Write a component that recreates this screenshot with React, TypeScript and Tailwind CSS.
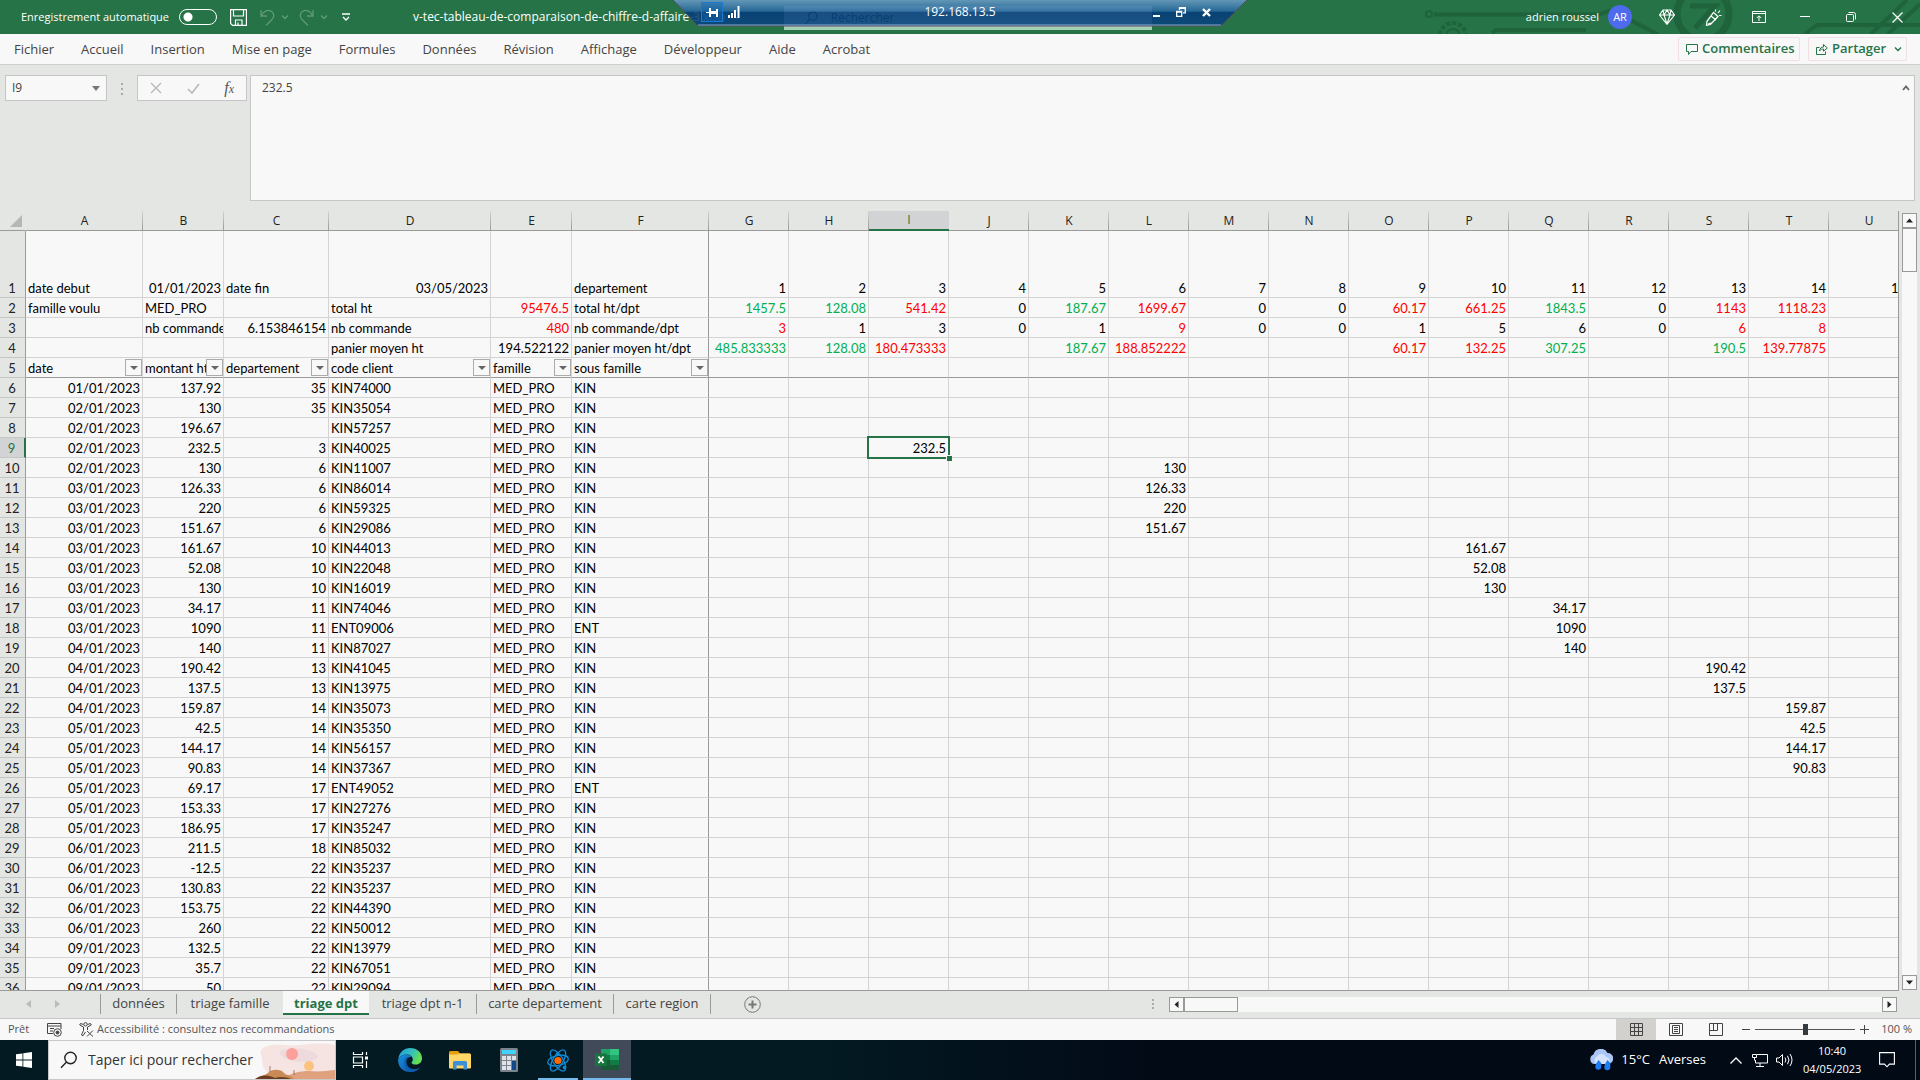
import React from 'react';
import { clsx } from 'clsx';

const MENU = ['Fichier', 'Accueil', 'Insertion', 'Mise en page', 'Formules', 'Données', 'Révision', 'Affichage', 'Développeur', 'Aide', 'Acrobat'];

const COLUMNS = [
  { name: 'A', width: 'w-[117px]' },
  { name: 'B', width: 'w-[81px]' },
  { name: 'C', width: 'w-[105px]' },
  { name: 'D', width: 'w-[162px]' },
  { name: 'E', width: 'w-[81px]' },
  { name: 'F', width: 'w-[137px]' },
  ...'GHIJKLMNOPQRSTU'.split('').map((name) => ({ name, width: 'w-[80px]' })),
];

type Cell = { text: string; align?: 'left' | 'right'; color?: 'red' | 'green'; filter?: boolean };

const l = (text: string): Cell => ({ text, align: 'left' });
const r = (text: string, color?: 'red' | 'green'): Cell => ({ text, align: 'right', color });
const f = (text: string): Cell => ({ text, align: 'left', filter: true });
const none: Cell = { text: '' };

const SUMMARY: Cell[][] = [
  [l('date debut'), r('01/01/2023'), l('date fin'), r('03/05/2023'), none, l('departement'),
    ...Array.from({ length: 15 }, (_, i) => r(String(i + 1)))],
  [l('famille voulu'), l('MED_PRO'), none, l('total ht'), r('95476.5', 'red'), l('total ht/dpt'),
    r('1457.5', 'green'), r('128.08', 'green'), r('541.42', 'red'), r('0'), r('187.67', 'green'), r('1699.67', 'red'), r('0'), r('0'),
    r('60.17', 'red'), r('661.25', 'red'), r('1843.5', 'green'), r('0'), r('1143', 'red'), r('1118.23', 'red'), none],
  [none, l('nb commande'), r('6.153846154'), l('nb commande'), r('480', 'red'), l('nb commande/dpt'),
    r('3', 'red'), r('1'), r('3'), r('0'), r('1'), r('9', 'red'), r('0'), r('0'), r('1'), r('5'), r('6'), r('0'), r('6', 'red'), r('8', 'red'), none],
  [none, none, none, l('panier moyen ht'), r('194.522122'), l('panier moyen ht/dpt'),
    r('485.833333', 'green'), r('128.08', 'green'), r('180.473333', 'red'), none, r('187.67', 'green'), r('188.852222', 'red'), none, none,
    r('60.17', 'red'), r('132.25', 'red'), r('307.25', 'green'), none, r('190.5', 'green'), r('139.77875', 'red'), none],
  [f('date'), f('montant ht'), f('departement'), f('code client'), f('famille'), f('sous famille'), ...Array.from({ length: 15 }, () => none)],
];

// date, montant, departement, code client, sous famille
const ORDERS: [string, string, string, string, string][] = [
  ['01/01/2023', '137.92', '35', 'KIN74000', 'KIN'],
  ['02/01/2023', '130', '35', 'KIN35054', 'KIN'],
  ['02/01/2023', '196.67', '', 'KIN57257', 'KIN'],
  ['02/01/2023', '232.5', '3', 'KIN40025', 'KIN'],
  ['02/01/2023', '130', '6', 'KIN11007', 'KIN'],
  ['03/01/2023', '126.33', '6', 'KIN86014', 'KIN'],
  ['03/01/2023', '220', '6', 'KIN59325', 'KIN'],
  ['03/01/2023', '151.67', '6', 'KIN29086', 'KIN'],
  ['03/01/2023', '161.67', '10', 'KIN44013', 'KIN'],
  ['03/01/2023', '52.08', '10', 'KIN22048', 'KIN'],
  ['03/01/2023', '130', '10', 'KIN16019', 'KIN'],
  ['03/01/2023', '34.17', '11', 'KIN74046', 'KIN'],
  ['03/01/2023', '1090', '11', 'ENT09006', 'ENT'],
  ['04/01/2023', '140', '11', 'KIN87027', 'KIN'],
  ['04/01/2023', '190.42', '13', 'KIN41045', 'KIN'],
  ['04/01/2023', '137.5', '13', 'KIN13975', 'KIN'],
  ['04/01/2023', '159.87', '14', 'KIN35073', 'KIN'],
  ['05/01/2023', '42.5', '14', 'KIN35350', 'KIN'],
  ['05/01/2023', '144.17', '14', 'KIN56157', 'KIN'],
  ['05/01/2023', '90.83', '14', 'KIN37367', 'KIN'],
  ['05/01/2023', '69.17', '17', 'ENT49052', 'ENT'],
  ['05/01/2023', '153.33', '17', 'KIN27276', 'KIN'],
  ['05/01/2023', '186.95', '17', 'KIN35247', 'KIN'],
  ['06/01/2023', '211.5', '18', 'KIN85032', 'KIN'],
  ['06/01/2023', '-12.5', '22', 'KIN35237', 'KIN'],
  ['06/01/2023', '130.83', '22', 'KIN35237', 'KIN'],
  ['06/01/2023', '153.75', '22', 'KIN44390', 'KIN'],
  ['06/01/2023', '260', '22', 'KIN50012', 'KIN'],
  ['09/01/2023', '132.5', '22', 'KIN13979', 'KIN'],
  ['09/01/2023', '35.7', '22', 'KIN67051', 'KIN'],
  ['09/01/2023', '50', '22', 'KIN29094', 'KIN'],
];

const ROWS: Cell[][] = [
  ...SUMMARY,
  ...ORDERS.map(([date, amount, dpt, client, sub]) => [
    r(date), r(amount), r(dpt), l(client), l('MED_PRO'), l(sub),
    ...Array.from({ length: 15 }, (_, i) => (Number(dpt) === i + 1 ? r(amount) : none)),
  ]),
];

const Chevron: React.FC<{ className?: string }> = ({ className }) => (
  <svg viewBox="0 0 8 6" className={clsx('h-[6px] w-2 shrink-0', className)} fill="none" stroke="currentColor" strokeWidth="1.4">
    <path d="M1 1.5l3 3 3-3" />
  </svg>
);

const TitleBar: React.FC = () => (
  <header className="relative grid h-[34px] shrink-0 grid-cols-[784fr_368px_768fr] items-center bg-[#257346] text-xs text-white">
    <svg className="absolute right-0 top-0 h-[34px] w-[500px]" viewBox="0 0 500 34" fill="none" stroke="#1f633c" strokeWidth="4">
      <path d="M14 14.500H178l14-4 46 24M72 33l4-3h90" />
      <circle cx="9" cy="14" r="3" strokeWidth="2" />
      <circle cx="33" cy="36" r="13" strokeWidth="4" strokeDasharray="4 2" />
      <circle cx="33" cy="36" r="7" strokeWidth="2" />
      <circle cx="283" cy="14" r="26" strokeWidth="7" />
      <path d="M270 6h25l-20 22" strokeWidth="5" />
      <path d="M385 34l12-9h103M451 34l36-34M468 34l32-30" />
    </svg>
    <div className="flex h-full min-w-0 items-center whitespace-nowrap pl-[21px]">
      <label htmlFor="autosave" className="w-[158px] shrink-0 text-[11px]">Enregistrement automatique</label>
      <input
        id="autosave"
        type="checkbox"
        className="h-4 w-[38px] shrink-0 appearance-none rounded-full border border-white bg-[radial-gradient(circle_at_8px_7px,white_4px,transparent_5px)]"
      />
      <button aria-label="Enregistrer" className="ml-[13px] shrink-0">
        <svg viewBox="0 0 17 17" className="size-[17px]" fill="none" stroke="currentColor" strokeWidth="1.2">
          <path d="M.6.600h15.800v15.800H2.600L.6 14.400zM3.500.600v6.400h10V.600M5.500 16V11h6.500v5M8 16v-2.500" />
        </svg>
      </button>
      <button aria-label="Annuler" className="ml-[13px] flex shrink-0 items-center gap-[6px] text-[#5f9b78]">
        <svg viewBox="0 0 15 17" className="h-[17px] w-[15px]" fill="none" stroke="currentColor" strokeWidth="1.3">
          <path d="M1 1v6h6M1.300 6.500C4 2 8 0 11.500 2.500s2.500 6 0 8.500l-5.500 5.500" />
        </svg>
        <Chevron />
      </button>
      <button aria-label="Rétablir" className="ml-[10px] flex shrink-0 items-center gap-[6px] text-[#5f9b78]">
        <svg viewBox="0 0 15 17" className="h-[17px] w-[15px]" fill="none" stroke="currentColor" strokeWidth="1.3">
          <path d="M14 1v6H8M13.700 6.500C11 2 7 0 3.500 2.500s-2.500 6 0 8.500l5.500 5.500" />
        </svg>
        <Chevron />
      </button>
      <button aria-label="Personnaliser" className="ml-[14px] shrink-0">
        <svg viewBox="0 0 8 8" className="size-2" fill="none" stroke="currentColor" strokeWidth="1.3">
          <path d="M0 1h8M1 4l3 3 3-3" />
        </svg>
      </button>
      <span className="ml-[63px]">v-tec-tableau-de-comparaison-de-chiffre-d-affaire-3.xlsb</span>
      <Chevron className="ml-2" />
    </div>
    <div className="mt-px flex h-6 items-center gap-3 bg-[#a3cfb5] pl-5 text-[#123b22]">
      <svg viewBox="0 0 16 16" className="size-4" fill="none" stroke="currentColor" strokeWidth="1.2">
        <circle cx="9.500" cy="6" r="4.500" />
        <path d="M6 9.500L1 15" />
      </svg>
      <input aria-label="Rechercher" placeholder="Rechercher" className="w-full bg-transparent outline-none placeholder:text-[#123b22]" />
    </div>
    <div className="relative flex items-center justify-end">
      <span className="text-[11px]">adrien roussel</span>
      <span className="ml-[9px] grid size-6 place-items-center rounded-full bg-[#4f6bed] text-[11px]">AR</span>
      <button aria-label="Premium" className="ml-[27px]">
        <svg viewBox="0 0 16 16" className="size-4" fill="none" stroke="currentColor" strokeWidth="1.1">
          <path d="M4 1h8l3.500 5L8 15.300.5 6zM.5 6h15M8 1L5 6l3 9 3-9zM4 1l1 5M12 1l-1 5" />
        </svg>
      </button>
      <button aria-label="Nouveautés" className="ml-[30px]">
        <svg viewBox="0 0 17 17" className="size-[17px]" fill="none" stroke="currentColor" strokeWidth="1.2">
          <path d="M8.500 3.500l4.500 4-7.500 8-4 .8.500-4zM3 15l4-1.200M6 7l5 4M10.500 2.500V.5M13 4l2-2.500M14 6.500h2.500" />
        </svg>
      </button>
      <button aria-label="Affichage du ruban" className="ml-[30px]">
        <svg viewBox="0 0 14 12" className="h-3 w-[14px]" fill="none" stroke="currentColor">
          <path d="M.5.5h13v11H.5zM.5 2.500h13M7 10V5M4.800 7L7 4.800 9.200 7" />
        </svg>
      </button>
      <button aria-label="Réduire" className="ml-[34px]">
        <svg viewBox="0 0 10 10" className="size-[10px]" stroke="currentColor"><path d="M0 4.500h10" /></svg>
      </button>
      <button aria-label="Restaurer" className="ml-9">
        <svg viewBox="0 0 10 10" className="size-[10px]" fill="none" stroke="currentColor">
          <rect x=".5" y="2.500" width="7" height="7" rx="1" />
          <path d="M2.500.5h5a2 2 0 012 2v5" />
        </svg>
      </button>
      <button aria-label="Fermer" className="ml-9 mr-[17px]">
        <svg viewBox="0 0 11 11" className="size-[11px]" stroke="currentColor" strokeWidth="1.2"><path d="M.5.5l10 10M10.500.5l-10 10" /></svg>
      </button>
    </div>
    <RemoteBar />
  </header>
);

// Remote desktop connection bar, pinned over the title bar
const RemoteBar: React.FC = () => (
  <div className="absolute left-1/2 top-0 h-[27px] w-[576px] -translate-x-1/2 text-white">
    <svg className="absolute inset-0 h-[27px] w-[576px]" viewBox="0 0 576 27">
      <defs>
        <linearGradient id="rdp" x1="0" y1="0" x2="0" y2="1">
          <stop offset="0" stopColor="#6b9cc6" />
          <stop offset=".44" stopColor="#2565a0" />
          <stop offset=".45" stopColor="#053c7b" />
          <stop offset="1" stopColor="#09437f" />
        </linearGradient>
      </defs>
      <path d="M1 0h574l-26 26H26z" fill="url(#rdp)" fillOpacity=".88" />
      <path d="M1 0l25 26h523L575 0" fill="none" stroke="#5b4a52" />
      <path d="M26 25h523" stroke="#86a9cf" />
    </svg>
    <div className="relative flex h-6 items-center justify-between pl-[29px] pr-[37px]">
      <div className="flex items-center gap-[5px]">
        <button aria-label="Épingler" className="grid h-5 w-[22px] place-items-center border border-[#1b7ad0] bg-[#0c62ae]/40">
          <svg viewBox="0 0 12 9" className="h-[9px] w-3" fill="currentColor"><path d="M0 4h3V0h2v3h5V1h2v8h-2V6H5v3H3V5H0z" /></svg>
        </button>
        <svg viewBox="0 0 12 12" className="size-3" fill="currentColor"><path d="M0 9h2v3H0zM3 7h2v5H3zM6 4h2v8H6zM9.500 0h2v12h-2z" /></svg>
      </div>
      <span className="pointer-events-none absolute inset-x-0 text-center leading-5">192.168.13.5</span>
      <div className="relative flex items-center gap-4">
        <button aria-label="Réduire la session"><svg viewBox="0 0 7 9" className="h-[9px] w-[7px]" fill="currentColor"><path d="M0 7h7v2H0z" /></svg></button>
        <button aria-label="Restaurer la session">
          <svg viewBox="0 0 10 10" className="size-[10px]" fill="none" stroke="currentColor" strokeWidth="1.300"><path d="M.7 4.500h5v4.800h-5zM.7 5.200h5M3.500 3V.7h5.800v5.100H7M3.500 1.300h5.500" /></svg>
        </button>
        <button aria-label="Fermer la session"><svg viewBox="0 0 9 9" className="size-[9px]" stroke="currentColor" strokeWidth="2.400"><path d="M1 1l7 7M8 1L1 8" /></svg></button>
      </div>
    </div>
  </div>
);

const MenuBar: React.FC = () => (
  <nav className="flex h-[31px] shrink-0 items-center border-b border-[#d2d0ce] bg-[#f8f8f8] pr-[13px] text-[#444]">
    {MENU.map((item) => (
      <button key={item} className="pl-[14px] pr-[13px] text-[13px] leading-5">{item}</button>
    ))}
    <button className="ml-auto flex h-6 w-[122px] items-center gap-1 rounded-xs border border-[#f1dfe3] pl-[7px] text-[13px] font-semibold text-[#257346]">
      <svg viewBox="0 0 12 11" className="h-[11px] w-3 shrink-0" fill="none" stroke="currentColor"><path d="M.5.5h11v7H5l-2.500 3v-3h-2z" /></svg>
      Commentaires
    </button>
    <button className="ml-2 flex h-6 w-[99px] items-center gap-1 rounded-xs border border-[#f1dfe3] pl-[7px] text-[13px] font-semibold text-[#257346]">
      <svg viewBox="0 0 12 12" className="size-3 shrink-0" fill="none" stroke="currentColor"><path d="M3.500 4.500h-3v7h9v-3M3.500 8c.5-3 2-4 4-4V1.500L11.300 5 7.500 8.200V6C6 6 4.500 6.500 3.500 8z" /></svg>
      Partager
      <Chevron className="ml-auto mr-1" />
    </button>
  </nav>
);

const FormulaBar: React.FC = () => (
  <div className="flex shrink-0 items-start bg-[#e4e6e3] px-[5px] py-[10px] text-[13px] text-[#444]">
    <div className="flex h-[26px] w-[102px] items-center border border-[#c6c6c6] bg-[#f8f8f8] pr-[6px]">
      <input aria-label="Zone de nom" defaultValue="I9" className="w-full min-w-0 bg-transparent pl-[6px] text-xs outline-none" />
      <button aria-label="Noms"><svg viewBox="0 0 8 5" className="h-[5px] w-2" fill="#777"><path d="M0 0h8L4 5z" /></svg></button>
    </div>
    <svg viewBox="0 0 2 12" className="mx-[14px] mt-2 h-3 w-[2px]" fill="#aaa"><path d="M0 0h2v2H0zM0 5h2v2H0zM0 10h2v2H0z" /></svg>
    <div className="flex h-[26px] w-[110px] items-center justify-between border border-[#c6c6c6] bg-[#f8f8f8] px-3">
      <button aria-label="Annuler la saisie"><svg viewBox="0 0 12 12" className="size-3" stroke="#b9b9b9" strokeWidth="1.400"><path d="M1 1l10 10M11 1L1 11" /></svg></button>
      <button aria-label="Valider"><svg viewBox="0 0 13 11" className="h-[11px] w-[13px]" fill="none" stroke="#b9b9b9" strokeWidth="1.600"><path d="M1 6l4 4 7-9" /></svg></button>
      <button aria-label="Insérer une fonction" className="font-['Liberation_Serif',serif] text-base italic leading-5 text-[#555]">f<span className="text-xs">x</span></button>
    </div>
    <div className="ml-[3px] flex h-[126px] flex-1 border border-[#c6c6c6] bg-[#f8f8f8]">
      <textarea aria-label="Barre de formule" defaultValue="232.5" className="h-full flex-1 resize-none bg-transparent pl-[11px] pt-[2px] text-xs leading-5 outline-none" />
      <button aria-label="Réduire la barre de formule" className="mr-1 mt-[9px] self-start">
        <svg viewBox="0 0 8 6" className="h-[6px] w-2" fill="none" stroke="#666" strokeWidth="1.800"><path d="M1 5l3-3.500L7 5" /></svg>
      </button>
    </div>
  </div>
);

const SheetCell: React.FC<{ cell: Cell; row: number; col: number }> = ({ cell, row, col }) => {
  const selected = row === 9 && COLUMNS[col].name === 'I';
  return (
    <td
      className={clsx(
        'relative h-5 whitespace-nowrap border-b border-r p-0 align-bottom leading-[17px]',
        row === 5 ? 'border-b-[#999b99]' : 'border-b-[#d4d4d4]',
        col === 5 ? 'border-r-[#999b99]' : 'border-r-[#d4d4d4]',
        cell.align === 'right' ? 'text-right' : 'text-left',
        cell.color === 'red' && 'text-[#ff0000]',
        cell.color === 'green' && 'text-[#00b050]',
        selected && 'z-10',
      )}
    >
      <div className="overflow-x-clip px-[2px]">{cell.text}</div>
      {cell.filter && (
        <button aria-label={`Filtrer ${cell.text}`} className="absolute right-0 top-px grid size-[17px] place-items-center border border-[#ababab] bg-[#f8f8f8]">
          <svg viewBox="0 0 8 4" className="h-1 w-2" fill="#666"><path d="M0 0h8L4 4z" /></svg>
        </button>
      )}
      {selected && (
        <span className="absolute -inset-[2px] border-2 border-[#257346]">
          <span className="absolute -bottom-1 -right-1 size-[6px] border-l border-t border-[#f8f8f8] bg-[#257346]" />
        </span>
      )}
    </td>
  );
};

const ScrollButton: React.FC<{ label: string; d: string }> = ({ label, d }) => (
  <button aria-label={label} className="grid size-[15px] shrink-0 place-items-center border border-[#999] bg-[#f8f8f8]">
    <svg viewBox="0 0 7 7" className="size-[7px]" fill="#222"><path d={d} /></svg>
  </button>
);

const Sheet: React.FC = () => (
  <div className="flex min-h-0 flex-1 bg-[#e4e6e3]">
    <div className="min-w-0 flex-1 overflow-hidden border-b border-r border-[#999b99]">
      <table className="w-[1909px] table-fixed border-separate border-spacing-0 bg-[#f8f8f8] font-['Lato',sans-serif] text-[13px] text-black">
        <thead className="bg-[#e4e6e3]">
          <tr>
            <th className="h-5 w-[26px] border-b border-r border-b-[#999b99] border-r-transparent p-0">
              <svg viewBox="0 0 12 12" className="ml-auto mr-[3px] size-3" fill="#b5b6b5"><path d="M12 0v12H0z" /></svg>
            </th>
            {COLUMNS.map(({ name, width }) => (
              <th
                key={name}
                className={clsx(
                  'h-5 p-0 font-[\'Open_Sans\',sans-serif] text-xs font-normal leading-[18px]',
                  width,
                  name === 'I'
                    ? 'border-b-2 border-[#257346] bg-[#d2d3d5] text-[#257346]'
                    : 'border-b border-[#999b99] bg-[linear-gradient(to_bottom,#d4d6d3,#999b99)] bg-[length:1px_100%] bg-right bg-no-repeat text-[#222]',
                )}
              >
                {name}
              </th>
            ))}
          </tr>
        </thead>
        <tbody>
          {ROWS.map((cells, i) => (
            <tr key={i} className={i === 0 ? 'h-[67px]' : 'h-5'}>
              <th
                className={clsx(
                  'h-5 border-b border-r border-b-[#c4c6c4] p-0 pr-px align-bottom font-normal leading-[17px]',
                  i === 8 ? 'border-r-2 border-r-[#257346] bg-[#d2d3d5] text-[#257346]' : 'border-r-[#999b99] bg-[#e4e6e3] text-[#222]',
                )}
              >
                {i + 1}
              </th>
              {cells.map((cell, col) => (
                <SheetCell key={col} cell={cell} row={i + 1} col={col} />
              ))}
            </tr>
          ))}
        </tbody>
      </table>
    </div>
    <div className="flex w-[21px] shrink-0 flex-col px-[3px] pb-px pt-[2px]">
      <ScrollButton label="Défiler vers le haut" d="M3.500 1.500L7 5.500H0z" />
      <div className="flex-1 bg-[#f8f8f8]">
        <div className="h-[44px] border border-[#999] bg-[#f8f8f8]" />
      </div>
      <ScrollButton label="Défiler vers le bas" d="M0 1.500h7L3.500 5.500z" />
    </div>
  </div>
);

const TABS = [
  { name: 'données', width: 'w-[76px]' },
  { name: 'triage famille', width: 'w-[106px]' },
  { name: 'triage dpt', width: 'w-[86px]' },
  { name: 'triage dpt n-1', width: 'w-[108px]' },
  { name: 'carte departement', width: 'w-[137px]' },
  { name: 'carte region', width: 'w-[97px]' },
];

const SheetTabs: React.FC = () => (
  <div className="flex h-7 shrink-0 items-start border-b border-[#c6c6c6] bg-[#e4e6e3] text-[13px] text-[#444]">
    <div className="flex h-[26px] w-[100px] items-center gap-6 pl-[26px]">
      <button aria-label="Feuille précédente"><svg viewBox="0 0 5 8" className="h-2 w-[5px]" fill="#bbb"><path d="M5 0v8L0 4z" /></svg></button>
      <button aria-label="Feuille suivante"><svg viewBox="0 0 5 8" className="h-2 w-[5px]" fill="#bbb"><path d="M0 0v8l5-4z" /></svg></button>
    </div>
    <span className="mt-[3px] h-5 w-px bg-[#999b99]" />
    {TABS.map(({ name, width }, i) => (
      <button
        key={name}
        className={clsx(
          'shrink-0 whitespace-nowrap',
          width,
          i === 2 && 'h-6 border-b-2 border-b-[#257346] bg-[#f8f8f8] font-bold leading-6 text-[#257346]',
          i !== 2 && 'mt-[3px] h-5 pb-[2px] leading-[18px]',
          i !== 1 && i !== 2 && 'border-r border-[#999b99]',
        )}
      >
        {name}
      </button>
    ))}
    <button aria-label="Nouvelle feuille" className="ml-[33px] mt-[5px]">
      <svg viewBox="0 0 17 17" className="size-[17px]" fill="none" stroke="#777">
        <circle cx="8.500" cy="8.500" r="7.800" />
        <path d="M8.500 4.500v8M4.500 8.500h8" strokeWidth="2" />
      </svg>
    </button>
    <svg viewBox="0 0 2 12" className="ml-auto mr-[15px] mt-2 h-3 w-[2px]" fill="#aaa"><path d="M0 0h2v2H0zM0 4h2v2H0zM0 8h2v2H0z" /></svg>
    <div className="mr-[23px] mt-[6px] flex w-[728px] bg-[#f8f8f8]">
      <ScrollButton label="Défiler à gauche" d="M1.500 3.500L5.500 0v7z" />
      <div className="w-[54px] border border-[#999]" />
      <div className="flex-1" />
      <ScrollButton label="Défiler à droite" d="M5.500 3.500L1.500 0v7z" />
    </div>
  </div>
);

const StatusBar: React.FC = () => (
  <div className="flex h-[21px] shrink-0 items-center bg-[#f8f8f8] px-2 text-[11px] text-[#555]">
    <span className="w-[39px]">Prêt</span>
    <button aria-label="Enregistrer une macro">
      <svg viewBox="0 0 15 14" className="h-[14px] w-[15px]" fill="none" stroke="#444">
        <path d="M14 6V.5H.5v10H6M.5 3h13.500M3 5.500h4M3 8h3" />
        <circle cx="10.500" cy="9.500" r="3.800" />
        <circle cx="10.500" cy="9.500" r="1.500" fill="#444" />
      </svg>
    </button>
    <button className="ml-[17px] flex items-center gap-[3px]">
      <svg viewBox="0 0 15 15" className="size-[15px]" fill="none" stroke="#444">
        <circle cx="6.500" cy="2.300" r="1.700" />
        <path d="M4.500 2.500L1.500 1.500l-.8 1.500L4.500 5v3.500L2.500 13l1.500.8L6.500 10M8.500 2.500l3-1 .8 1.500L8.500 5v3M8 9l6 5.500M14 8.500L8 14.500" />
      </svg>
      Accessibilité : consultez nos recommandations
    </button>
    <button aria-label="Normal" className="ml-auto grid h-full w-10 place-items-center bg-[#d2d1cd]">
      <svg viewBox="0 0 13 13" className="size-[13px]" fill="none" stroke="#444"><path d="M.5.5h12v12H.5zM.5 4.500h12M.5 8.500h12M4.500.5v12M8.500.5v12" /></svg>
    </button>
    <button aria-label="Mise en page" className="grid h-full w-10 place-items-center">
      <svg viewBox="0 0 14 13" className="h-[13px] w-[14px]" fill="none" stroke="#444"><path d="M.5.5h13v12H.5zM3.500 2.500h7v8h-7zM5 4.500h4M5 6.500h4M5 8.500h4" /></svg>
    </button>
    <button aria-label="Avec sauts de page" className="grid h-full w-10 place-items-center">
      <svg viewBox="0 0 14 13" className="h-[13px] w-[14px]" fill="none" stroke="#444"><path d="M.5.5h13v12H.5zM.5 7.500h8v-7M4.500.5v7" /></svg>
    </button>
    <button aria-label="Zoom arrière" className="ml-[6px]">
      <svg viewBox="0 0 8 9" className="h-[9px] w-2" stroke="#444"><path d="M0 4.500h8" /></svg>
    </button>
    <input
      aria-label="Zoom"
      type="range"
      className="mx-[5px] h-[11px] w-[100px] appearance-none bg-[linear-gradient(#555,#555)] bg-[length:100%_1px] bg-center bg-no-repeat [&::-webkit-slider-thumb]:h-[11px] [&::-webkit-slider-thumb]:w-[5px] [&::-webkit-slider-thumb]:appearance-none [&::-webkit-slider-thumb]:bg-[#333b40]"
    />
    <button aria-label="Zoom avant">
      <svg viewBox="0 0 9 9" className="size-[9px]" stroke="#444"><path d="M0 4.500h9M4.500 0v9" /></svg>
    </button>
    <span className="ml-3 whitespace-nowrap">100 %</span>
  </div>
);

const Taskbar: React.FC = () => (
  <footer className="flex h-10 shrink-0 items-stretch bg-[linear-gradient(to_right,#031a23,#031a23_42%,#020a16_60%)] text-white">
    <button aria-label="Démarrer" className="grid w-12 place-items-center">
      <svg viewBox="0 0 16 16" className="size-4" fill="currentColor"><path d="M0 2.300l6.500-.9v6.200H0zM7.300 1.300L16 0v7.600H7.300zM0 8.400h6.500v6.200L0 13.700zM7.300 8.400H16V16l-8.700-1.200z" /></svg>
    </button>
    <div className="relative flex w-[288px] items-center border border-[#c8c8c8] bg-[#f8f8f8] pl-[11px]">
      <svg viewBox="0 0 18 18" className="size-[18px] shrink-0" fill="none" stroke="#222" strokeWidth="1.400">
        <circle cx="10.500" cy="7" r="5.700" />
        <path d="M6.500 11L1 16.800" />
      </svg>
      <input aria-label="Recherche Windows" placeholder="Taper ici pour rechercher" className="ml-[10px] w-full bg-transparent text-sm outline-none placeholder:text-[#333]" />
      <svg viewBox="0 0 80 38" className="absolute bottom-0 right-0 h-[38px] w-20">
        <path d="M80 4C60 0 45 6 30 4S3 6 6 14s-2 14 12 20l62 4z" fill="#f5e4e2" />
        <path d="M28 9c10-3 30-1 34 5s-14 8-24 6-18-9-10-11z" fill="#eed9dd" />
        <circle cx="37" cy="13" r="6" fill="#fba09a" />
        <circle cx="54" cy="25" r="5" fill="#fcc37e" />
        <path d="M30 36c8-4 14-6 24-6 10 1 16 0 26-1v9H20z" fill="#dfa17e" />
        <path d="M0 38c6-4 10-3 14-7 4-3 12-3 15 1 3 3 6 1 10 6z" fill="#c98a55" />
        <path d="M0 38c7-5 14-4 20-1 5-2 12-1 16 1z" fill="#6b3d22" />
        <path d="M15 31v-6M39 34v-5" stroke="#7b5a4a" strokeWidth=".7" />
      </svg>
    </div>
    <button aria-label="Vue des tâches" className="grid w-12 place-items-center">
      <svg viewBox="0 0 17 16" className="h-4 w-[17px]" fill="none" stroke="currentColor" strokeWidth="1.200">
        <path d="M1.500 0v2.500h9V0M1.500 5h9v6h-9zM1.500 16v-2.500h9V16M14.500 0v3M14.500 9v7" />
        <path d="M13 4.500h3v3h-3z" fill="currentColor" stroke="none" />
      </svg>
    </button>
    <button aria-label="Microsoft Edge" className="grid w-[52px] place-items-center">
      <svg viewBox="0 0 24 24" className="size-6">
        <defs>
          <linearGradient id="edgeTop" x1="0" y1="0" x2="1" y2=".4">
            <stop offset="0" stopColor="#1f9de0" />
            <stop offset=".6" stopColor="#35c1b8" />
            <stop offset="1" stopColor="#66e04f" />
          </linearGradient>
          <linearGradient id="edgeLow" x1="0" y1="0" x2="1" y2="1">
            <stop offset="0" stopColor="#1b8fdf" />
            <stop offset="1" stopColor="#0b4ea0" />
          </linearGradient>
        </defs>
        <path d="M.3 11C1 4.500 6 0 12.200 0 19 0 24 4.800 24 10.200c0 4-3 6.300-6.300 6.300-2.700 0-4.200-1-4.200-1.800 0-.6 1.300-1.200 1.300-3.200C14.800 8.500 12 6.500 8.800 6.500 5 6.500 1.500 8.300.3 11z" fill="url(#edgeTop)" />
        <path d="M.2 11.500C1.500 8.300 5 6.500 8.800 6.500c2.200 0 4 1 5 2.300-3-.5-5.600 1.800-5.600 5.200 0 4 3.500 7.300 8 7.300 2.500 0 4.500-1 5.800-2.100C20 22 16.500 24 12 24 5 24-.5 18.500.2 11.500z" fill="url(#edgeLow)" />
        <path d="M8.800 8.800C4.500 12 6 22 12.500 24c4.500 0 7.500-2 9.500-4.800-1.300 1.100-3.300 2.100-5.800 2.100-4.500 0-8-3.300-8-7.300 0-2.300 1-4 2.600-4.800z" fill="#0d5cb0" />
      </svg>
    </button>
    <button aria-label="Explorateur de fichiers" className="grid w-[47px] place-items-center">
      <svg viewBox="0 0 22 19" className="h-[19px] w-[22px]">
        <path d="M0 1.500Q0 0 1.500 0H9l2 2.500h9.500Q22 2.500 22 4v13H0z" fill="#e5a00d" />
        <path d="M0 3.500h8.500l2-1h10q1.500 0 1.500 1.500v12.500q0 1-1 1H1q-1 0-1-1z" fill="#ffd768" />
        <path d="M4 18.500v-7q0-1.500 1.500-1.500h11q1.500 0 1.500 1.500v7h-3.500v-4h-7v4z" fill="#3f8fd8" />
      </svg>
    </button>
    <button aria-label="Calculatrice" className="grid w-[51px] place-items-center">
      <svg viewBox="0 0 18 24" className="h-6 w-[18px]">
        <rect width="18" height="24" rx="1.500" fill="#7b838c" />
        <path d="M2 2h14v4H2z" fill="#3fd2fa" />
        <path d="M2 8h4v4H2zM7 8h4v4H7zM12 8h4v4h-4zM2 13h4v4H2zM7 13h4v4H7zM2 18h4v4H2zM7 18h4v4H7z" fill="#dfe2e6" />
        <path d="M12 13h4v9h-4z" fill="#0f4a8a" />
      </svg>
    </button>
    <button aria-label="Atome" className="mx-1 grid w-10 place-items-center border-b-2 border-[#76b9ed]">
      <svg viewBox="0 0 24 24" className="mt-[2px] size-6" fill="none" stroke="#118bd8" strokeWidth="1.300">
        <ellipse cx="12" cy="12.500" rx="12" ry="5" transform="rotate(58 12 12.500)" />
        <ellipse cx="12" cy="12.500" rx="12" ry="5" transform="rotate(122 12 12.500)" />
        <ellipse cx="12" cy="12.500" rx="10.500" ry="5" transform="rotate(-12 12 12.500)" />
        <circle cx="12" cy="12.500" r="3.600" fill="#ff6a00" stroke="none" />
        <circle cx="11.500" cy="6" r="1.800" fill="#118bd8" stroke="none" />
        <circle cx="18.500" cy="19.500" r="1.800" fill="#118bd8" stroke="none" />
      </svg>
    </button>
    <button aria-label="Excel" className="ml-px grid w-12 place-items-center border-b-2 border-[#76b9ed] bg-[#404a58]">
      <svg viewBox="0 0 24 22" className="mt-[2px] h-[22px] w-6">
        <path d="M6 0h9v6H6z" fill="#21a366" />
        <path d="M15 0h9v6h-9z" fill="#33c481" />
        <path d="M6 6h9v5H6z" fill="#107c41" />
        <path d="M15 6h9v5h-9z" fill="#21a366" />
        <path d="M6 11h9v5H6z" fill="#185c37" />
        <path d="M15 11h9v5h-9z" fill="#107c41" />
        <path d="M6 16h18v5H6z" fill="#185c37" />
        <rect y="4.500" width="12" height="12.500" rx="1" fill="#17753f" />
        <path d="M3.500 7.500l5 6.500M8.500 7.500l-5 6.500" stroke="#fff" strokeWidth="1.800" />
      </svg>
    </button>
    <button className="ml-auto flex items-center text-[13px]">
      <svg viewBox="0 0 24 22" className="mr-2 h-[22px] w-6">
        <path d="M5 15a5 5 0 01-.5-9.500A7.500 7.500 0 0118.500 4a5.500 5.500 0 01.5 11z" fill="#a9c6f7" />
        <path d="M8 15a4 4 0 010-7.500 5 5 0 019 .5 3.800 3.800 0 012 7z" fill="#d6e3fb" />
        <path d="M9.500 11c-2 3-3.200 5-3.200 6.800a3 3 0 006 0V14zM18.500 11c-2 3-3.200 5-3.200 7.200a3 3 0 006 0V14z" fill="#1f7cf2" />
      </svg>
      <span>15°C</span>
      <span className="ml-[9px]">Averses</span>
    </button>
    <button aria-label="Icônes cachées" className="ml-6 grid w-3 place-items-center">
      <svg viewBox="0 0 12 7" className="h-[7px] w-3" fill="none" stroke="currentColor" strokeWidth="1.300"><path d="M.5 6.500L6 1l5.500 5.500" /></svg>
    </button>
    <button aria-label="Réseau" className="ml-[10px] grid w-4 place-items-center">
      <svg viewBox="0 0 16 13" className="h-[13px] w-4" fill="none" stroke="currentColor"><path d="M5 .5h10.500v8.500H3.500V6M.5.5h4v3h-4zM2.500 3.500v3M4 12.500h8M8 9v3.500" /></svg>
    </button>
    <button aria-label="Volume" className="ml-2 grid w-[17px] place-items-center">
      <svg viewBox="0 0 17 14" className="h-[14px] w-[17px]" fill="none" stroke="currentColor"><path d="M.5 5h2.500L6.500 1.500v11L3 9H.5zM9 4.500q1.800 2.500 0 5M11.500 2.800q3 4.200 0 8.400M14 1q4 6 0 12" /></svg>
    </button>
    <button className="ml-[10px] w-[58px] whitespace-nowrap text-center text-[11px] leading-[18px]">
      10:40
      <br />
      04/05/2023
    </button>
    <button aria-label="Notifications" className="ml-[18px] mr-5 grid w-4 place-items-center">
      <svg viewBox="0 0 16 16" className="size-4" fill="none" stroke="currentColor" strokeWidth="1.100"><path d="M.6.600h14.800v11.500h-5L8 14.800l-2.500-2.700H.6z" /></svg>
    </button>
    <span className="mr-1 w-px bg-[#5a6068]" />
  </footer>
);

export default function App() {
  return (
    <div className="flex h-screen flex-col overflow-hidden bg-[#e4e6e3] font-['Open_Sans',sans-serif]">
      <TitleBar />
      <MenuBar />
      <FormulaBar />
      <Sheet />
      <SheetTabs />
      <StatusBar />
      <Taskbar />
    </div>
  );
}
